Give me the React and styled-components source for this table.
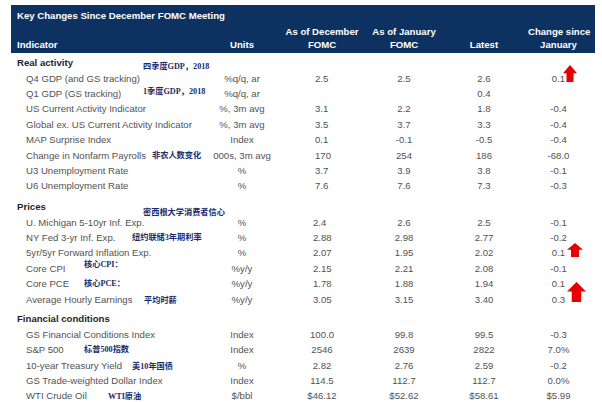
import React from 'react';
import styled, { createGlobalStyle } from 'styled-components';

const GlobalStyle = createGlobalStyle`
  html, body { margin: 0; padding: 0; background: #ffffff; }
  body { font-family: "Liberation Sans", Arial, sans-serif; }
`;

const COLS = '201px 60px 100px 64px 96px 63px';

const Frame = styled.div`
  width: 602px;
  height: 402px;
  overflow: hidden;
  box-sizing: border-box;
  padding: 5px 7px 0 11px;
  background: #fff;
`;

const Table = styled.div`
  width: 584px;
`;

const Head = styled.header`
  background: #0d3262;
  color: #ffffff;
  font-weight: 700;
  font-size: 9.6px;
  padding: 5px 0 2.5px;
`;

const Title = styled.div`
  line-height: 12px;
  padding-left: 6px;
  white-space: nowrap;
`;

const HeadGrid = styled.div`
  display: grid;
  grid-template-columns: ${COLS};
  align-items: end;
  margin-top: 2.5px;
  line-height: 13px;
`;

const HeadCell = styled.div`
  text-align: ${p => (p.$left ? 'left' : 'center')};
  padding-left: ${p => (p.$left ? 6 : 0)}px;
  padding-right: ${p => p.$pr || 0}px;
  margin-left: ${p => p.$ml || 0}px;
  white-space: nowrap;
`;

const Body = styled.div`
  padding-top: 2.3px;
  font-size: 9.6px;
  color: #525252;
`;

const Section = styled.section`
  margin-top: ${p => p.$gap}px;
`;

const SectionTitle = styled.div`
  height: 15.4px;
  line-height: 15.4px;
  font-weight: 700;
  color: #1f1f1f;
  padding-left: 6px;
`;

const Row = styled.div`
  position: relative;
  display: grid;
  grid-template-columns: ${COLS};
  height: 15.4px;
  line-height: 15.4px;
  white-space: nowrap;
`;

const Label = styled.div`
  padding-left: 15px;
`;

const Unit = styled.div`
  text-align: center;
`;

const Value = styled.div`
  text-align: ${p => p.$align || 'center'};
  padding-left: ${p => p.$pl || 0}px;
  padding-right: ${p => p.$pr || 0}px;
`;

const Note = styled.span`
  position: absolute;
  left: ${p => p.$x}px;
  top: ${p => p.$dy}px;
  font-family: "Liberation Serif", "Noto Sans CJK SC", serif;
  font-weight: 700;
  font-size: 8.2px;
  line-height: 15.4px;
  color: #1b2b6b;
  white-space: nowrap;
`;

const ArrowBox = styled.svg`
  position: absolute;
  left: ${p => p.$x}px;
  top: ${p => p.$y}px;
`;

const UpArrow = ({ x, y, w, h }) => {
  const hb = h * 0.48;
  const s1 = w * 0.25;
  const s2 = w * 0.75;
  return (
    <ArrowBox $x={x} $y={y} width={w} height={h} viewBox={`0 0 ${w} ${h}`}>
      <polygon
        points={`${w / 2},0 ${w},${hb} ${s2},${hb} ${s2},${h} ${s1},${h} ${s1},${hb} 0,${hb}`}
        fill="#e60000"
      />
    </ArrowBox>
  );
};

const sections = [
  {
    title: 'Real activity',
    gap: 0,
    decLeft: 43,
    rows: [
      { l: 'Q4 GDP (and GS tracking)', u: '%q/q, ar', d: '2.5', j: '2.5', t: '2.6', c: '0.1',
        note: { text: '四季度GDP，2018', x: 132, dy: -11.4 },
        arrow: { x: 552, y: -5.7, w: 14, h: 17 } },
      { l: 'Q1 GDP (GS tracking)', u: '%q/q, ar', d: '', j: '', t: '0.4', c: '',
        note: { text: '1季度GDP，2018', x: 132, dy: -1.8 } },
      { l: 'US Current Activity Indicator', u: '%, 3m avg', d: '3.1', j: '2.2', t: '1.8', c: '-0.4' },
      { l: 'Global ex. US Current Activity Indicator', u: '%, 3m avg', d: '3.5', j: '3.7', t: '3.3', c: '-0.4' },
      { l: 'MAP Surprise Index', u: 'Index', d: '0.1', j: '-0.1', t: '-0.5', c: '-0.4' },
      { l: 'Change in Nonfarm Payrolls', u: '000s, 3m avg', d: '170', j: '254', t: '186', c: '-68.0',
        note: { text: '非农人数变化', x: 141, dy: 0 } },
      { l: 'U3 Unemployment Rate', u: '%', d: '3.7', j: '3.9', t: '3.8', c: '-0.1' },
      { l: 'U6 Unemployment Rate', u: '%', d: '7.6', j: '7.6', t: '7.3', c: '-0.3' },
    ],
  },
  {
    title: 'Prices',
    gap: 5.4,
    decLeft: 41,
    rows: [
      { l: 'U. Michigan 5-10yr Inf. Exp.', u: '%', d: '2.4', j: '2.6', t: '2.5', c: '-0.1',
        note: { text: '密西根大学消费者信心', x: 132, dy: -9.4 } },
      { l: 'NY Fed 3-yr Inf. Exp.', u: '%', d: '2.88', j: '2.98', t: '2.77', c: '-0.2',
        note: { text: '纽约联储3年期利率', x: 121, dy: 0.2 } },
      { l: '5yr/5yr Forward Inflation Exp.', u: '%', d: '2.07', j: '1.95', t: '2.02', c: '0.1',
        arrow: { x: 556, y: -2.5, w: 16, h: 14 } },
      { l: 'Core CPI', u: '%y/y', d: '2.15', j: '2.21', t: '2.08', c: '-0.1',
        note: { text: '核心CPI：', x: 73, dy: -3.6 } },
      { l: 'Core PCE', u: '%y/y', d: '1.78', j: '1.88', t: '1.94', c: '0.1',
        note: { text: '核心PCE：', x: 73, dy: 0 },
        arrow: { x: 556, y: 5.4, w: 19, h: 20 } },
      { l: 'Average Hourly Earnings', u: '%y/y', d: '3.05', j: '3.15', t: '3.40', c: '0.3',
        note: { text: '平均时薪', x: 133, dy: 1.6 } },
    ],
  },
  {
    title: 'Financial conditions',
    gap: 4.4,
    decLeft: 0,
    rows: [
      { l: 'GS Financial Conditions Index', u: 'Index', d: '100.0', j: '99.8', t: '99.5', c: '-0.3' },
      { l: 'S&P 500', u: 'Index', d: '2546', j: '2639', t: '2822', c: '7.0%',
        note: { text: '标普500指数', x: 73, dy: 0 } },
      { l: '10-year Treasury Yield', u: '%', d: '2.82', j: '2.76', t: '2.59', c: '-0.2',
        note: { text: '美10年国债', x: 121, dy: 1.6 } },
      { l: 'GS Trade-weighted Dollar Index', u: 'Index', d: '114.5', j: '112.7', t: '112.7', c: '0.0%' },
      { l: 'WTI Crude Oil', u: '$/bbl', d: '$46.12', j: '$52.62', t: '$58.61', c: '$5.99',
        note: { text: 'WTI原油', x: 97, dy: 1 } },
    ],
  },
];

export default function App() {
  return (
    <>
      <GlobalStyle />
      <Frame>
        <Table>
          <Head>
            <Title>Key Changes Since December FOMC Meeting</Title>
            <HeadGrid>
              <HeadCell $left>Indicator</HeadCell>
              <HeadCell>Units</HeadCell>
              <HeadCell>As of December<br />FOMC</HeadCell>
              <HeadCell>As of January<br />FOMC</HeadCell>
              <HeadCell>Latest</HeadCell>
              <HeadCell $ml={-4} $pr={6}>Change since<br />January</HeadCell>
            </HeadGrid>
          </Head>
          <Body>
            {sections.map(sec => (
              <Section key={sec.title} $gap={sec.gap}>
                <SectionTitle>{sec.title}</SectionTitle>
                {sec.rows.map(r => (
                  <Row key={r.l}>
                    <Label>{r.l}</Label>
                    <Unit>{r.u}</Unit>
                    {sec.decLeft ? (
                      <Value $align="left" $pl={sec.decLeft}>{r.d}</Value>
                    ) : (
                      <Value>{r.d}</Value>
                    )}
                    <Value>{r.j}</Value>
                    <Value>{r.t}</Value>
                    <Value $pr={10}>{r.c}</Value>
                    {r.note && <Note $x={r.note.x} $dy={r.note.dy}>{r.note.text}</Note>}
                    {r.arrow && <UpArrow {...r.arrow} />}
                  </Row>
                ))}
              </Section>
            ))}
          </Body>
        </Table>
      </Frame>
    </>
  );
}
